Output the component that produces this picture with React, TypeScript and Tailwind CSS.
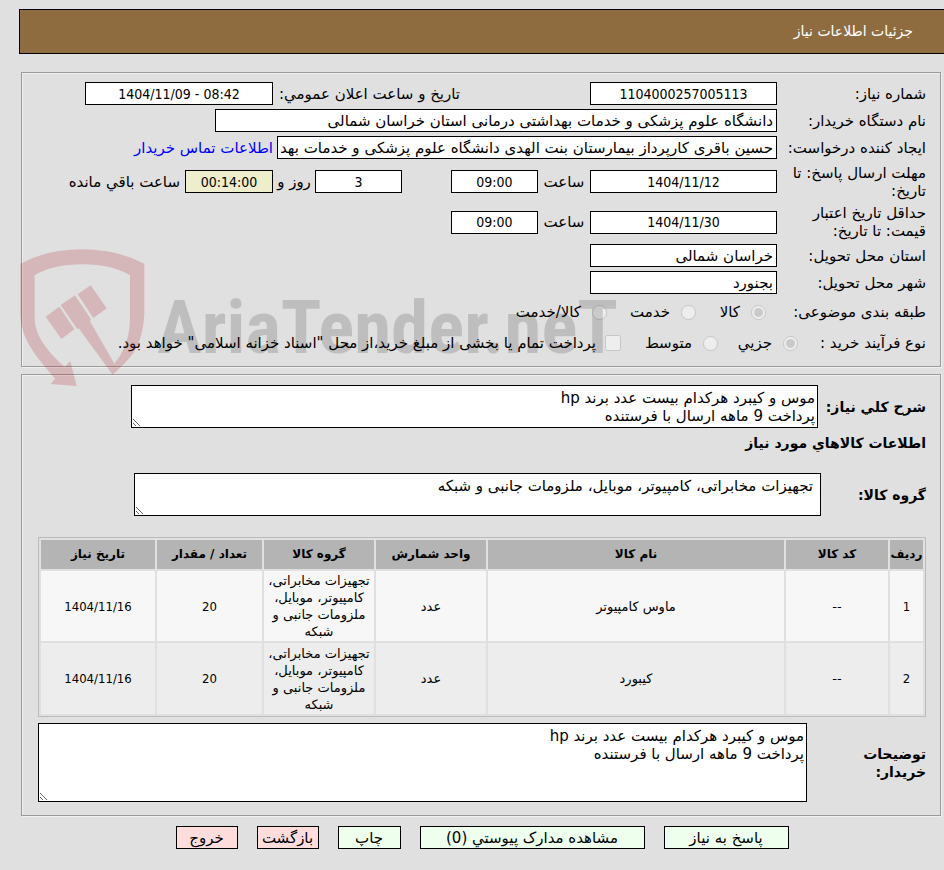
import React from 'react';

const items = [
  { id: 1, code: '--', name: 'ماوس کامپیوتر', unit: 'عدد', count: '20', date: '1404/11/16' },
  { id: 2, code: '--', name: 'کیبورد', unit: 'عدد', count: '20', date: '1404/11/16' },
];

const group = 'تجهیزات مخابراتی، کامپیوتر، موبایل، ملزومات جانبی و شبکه';
const description = 'موس و کیبرد هرکدام بیست عدد برند hp\nپرداخت 9 ماهه ارسال با فرستنده';

const fieldset = 'ml-[21px] mr-[3px] border border-[#9a9a9a] shadow-[1px_1px_0_#f0f0f0,inset_1px_1px_0_#f0f0f0] pr-[14px] pl-4';
const box = 'h-[23px] shrink-0 border border-black bg-white px-[3px] text-black outline-none';
// numbers and dates use the narrower face
const numeric = "text-center text-[14px] font-['DejaVu_Sans_Condensed','DejaVu_Sans',sans-serif]";
const area = 'block border border-black bg-white text-black outline-none overflow-hidden leading-[18px] pt-[3px]';
const button = 'h-[23px] border border-black text-center whitespace-nowrap';

const Row = ({ label, id, className, children }: { label: React.ReactNode; id?: string; className?: string; children: React.ReactNode }) => (
  <div className={`flex items-center ${className || 'h-[27px]'}`}>
    <label htmlFor={id} className="w-[149px] shrink-0 whitespace-nowrap">{label}</label>
    {children}
  </div>
);

const Watermark = () => (
  <div dir="ltr" className="absolute left-5 top-[249px] flex items-start gap-3 pointer-events-none">
    <svg width="125" height="138" viewBox="60 29 375 414" className="opacity-20 shrink-0" fill="#ae1822">
      <path d="M61 73Q140 30 247 30Q350 30 433 73V225Q430 295 400 342Q375 374 338 406L236 267L232 270L182 197L225 168L273 240L270 246L343 373Q390 315 390 235V108Q335 75 247 75Q158 75 104 108V235Q104 270 125 305Q150 345 194 383L211 366L230 440L152 434L165 418Q130 378 105 345Q61 285 61 225Z" />
      <path d="M137 232L178 202L223 270L184 299Z" />
      <path d="M233 165L272 138L320 207L280 236Z" />
    </svg>
    <span className="mt-[42px] font-['Roboto_Condensed',Lato,'Liberation_Sans',sans-serif] text-[75px] leading-[72px] font-bold text-black/15">AriaTender.neT</span>
  </div>
);

const App = () => {
  return (
    <main
      dir="rtl"
      className="relative min-h-screen bg-[#e0e0e0] pt-[9px] pb-5 text-black text-[15px] leading-[18px] font-['DejaVu_Sans',sans-serif]"
    >
      <h1 className="ml-[19px] h-[45px] border-y border-l border-black bg-[#8f6c40] pr-[31px] text-white text-[14px] leading-[43px]">
        جزئیات اطلاعات نیاز
      </h1>

      <section className={`${fieldset} mt-[18px] pt-[7px] pb-2`}>
        <Row label="شماره نیاز:" id="number">
          <input id="number" readOnly defaultValue="1104000257005113" className={`${box} ${numeric} w-[187px]`} />
          <label htmlFor="announce" className="mr-[130px] w-[187px] shrink-0 whitespace-nowrap">تاریخ و ساعت اعلان عمومي:</label>
          <input id="announce" readOnly dir="ltr" defaultValue="1404/11/09 - 08:42" className={`${box} ${numeric} w-[188px]`} />
        </Row>
        <Row label="نام دستگاه خریدار:" id="buyer">
          <input id="buyer" readOnly defaultValue="دانشگاه علوم پزشکی و خدمات بهداشتی درمانی استان خراسان شمالی" className={`${box} w-[562px]`} />
        </Row>
        <Row label="ایجاد کننده درخواست:" id="creator">
          <input id="creator" readOnly defaultValue="حسین باقری کارپرداز بیمارستان بنت الهدی دانشگاه علوم پزشکی و خدمات بهد" className={`${box} w-[500px]`} />
          <a href="#contact" className="mr-1 whitespace-nowrap text-[#0000ff]">اطلاعات تماس خریدار</a>
        </Row>
        <Row label={<>مهلت ارسال پاسخ: تا<br />تاریخ:</>} id="deadline" className="h-[41px]">
          <input id="deadline" readOnly defaultValue="1404/11/12" className={`${box} ${numeric} w-[187px]`} />
          <label htmlFor="deadline-time" className="w-[52px] text-center">ساعت</label>
          <input id="deadline-time" readOnly defaultValue="09:00" className={`${box} ${numeric} w-[87px]`} />
          <input id="days" readOnly defaultValue="3" className={`${box} ${numeric} mr-[49px] w-[87px]`} />
          <label htmlFor="days" className="w-[42px] text-center whitespace-nowrap">روز و</label>
          <input id="left" readOnly defaultValue="00:14:00" className={`${numeric} h-[23px] w-[88px] shrink-0 border border-black bg-[#eeeecc] outline-none`} />
          <label htmlFor="left" className="mr-[5px] whitespace-nowrap">ساعت باقي مانده</label>
        </Row>
        <Row label={<>حداقل تاریخ اعتبار<br />قیمت: تا تاریخ:</>} id="validity" className="h-10">
          <input id="validity" readOnly defaultValue="1404/11/30" className={`${box} ${numeric} w-[187px]`} />
          <label htmlFor="validity-time" className="w-[52px] text-center">ساعت</label>
          <input id="validity-time" readOnly defaultValue="09:00" className={`${box} ${numeric} w-[87px]`} />
        </Row>
        <Row label="استان محل تحویل:" id="province">
          <input id="province" readOnly defaultValue="خراسان شمالی" className={`${box} w-[187px]`} />
        </Row>
        <Row label="شهر محل تحویل:" id="city">
          <input id="city" readOnly defaultValue="بجنورد" className={`${box} w-[187px]`} />
        </Row>
        <div className="flex h-8 items-center whitespace-nowrap">
          <span className="w-[160px] shrink-0">طبقه بندی موضوعی:</span>
          <input type="radio" id="goods" name="category" disabled defaultChecked className="size-[15px]" />
          <label htmlFor="goods" className="w-[55px] pr-[11px]">کالا</label>
          <input type="radio" id="service" name="category" disabled className="size-[15px]" />
          <label htmlFor="service" className="w-[74px] pr-[11px]">خدمت</label>
          <input type="radio" id="both" name="category" disabled className="size-[15px]" />
          <label htmlFor="both" className="pr-[11px]">کالا/خدمت</label>
        </div>
        <div className="flex h-[30px] items-center whitespace-nowrap">
          <span className="w-[128px] shrink-0">نوع فرآیند خرید :</span>
          <input type="radio" id="small" name="process" disabled defaultChecked className="size-[15px]" />
          <label htmlFor="small" className="w-[65px] pr-[11px]">جزيي</label>
          <input type="radio" id="medium" name="process" disabled className="size-[15px]" />
          <label htmlFor="medium" className="w-[82px] pr-[11px]">متوسط</label>
          <input type="checkbox" id="treasury" disabled className="size-4" />
          <label htmlFor="treasury" className="pr-[9px]">پرداخت تمام یا بخشی از مبلغ خرید،از محل "اسناد خزانه اسلامی" خواهد بود.</label>
        </div>
      </section>

      <section className={`${fieldset} mt-[7px] pt-[10px] pb-[13px]`}>
        <div className="flex items-center">
          <label htmlFor="summary" className="w-[108px] shrink-0 text-[14px] font-bold whitespace-nowrap">شرح کلي نیاز:</label>
          <textarea id="summary" readOnly defaultValue={description} className={`${area} ml-[93px] h-[43px] flex-1 px-[2px]`} />
        </div>
        <h2 className="mt-[6px] h-[18px] text-[14px] font-bold">اطلاعات کالاهاي مورد نیاز</h2>
        <div className="mt-[21px] flex items-center">
          <label htmlFor="group" className="w-[105px] shrink-0 text-[14px] font-bold whitespace-nowrap">گروه کالا:</label>
          <textarea id="group" readOnly defaultValue={group} className={`${area} ml-24 h-[43px] flex-1 px-[7px]`} />
        </div>

        <table className="mt-[21px] w-full table-fixed border-separate border-spacing-[2px] border border-[#bbbbbb] text-center text-[13px] leading-[17px]">
          <thead>
            <tr className="h-[29px] bg-[#b4b4b4] text-[12px] whitespace-nowrap">
              <th className="w-[33px]">ردیف</th>
              <th className="w-[102px]">کد کالا</th>
              <th>نام کالا</th>
              <th className="w-[110px]">واحد شمارش</th>
              <th className="w-[110px]">گروه کالا</th>
              <th className="w-[105px]">تعداد / مقدار</th>
              <th className="w-[114px]">تاریخ نیاز</th>
            </tr>
          </thead>
          <tbody>
            {items.map((item) => (
              <tr key={item.id} className="h-[70px] even:h-[71px] odd:bg-[#f7f7f7] even:bg-[#ededed]">
                <td className="font-['DejaVu_Sans_Condensed',sans-serif]">{item.id}</td>
                <td>{item.code}</td>
                <td>{item.name}</td>
                <td>{item.unit}</td>
                <td>{group}</td>
                <td className="font-['DejaVu_Sans_Condensed',sans-serif]">{item.count}</td>
                <td className="font-['DejaVu_Sans_Condensed',sans-serif]">{item.date}</td>
              </tr>
            ))}
          </tbody>
        </table>

        <div className="mt-[6px] flex items-center">
          <label htmlFor="notes" className="w-[119px] shrink-0 text-[14px] font-bold">توضیحات<br />خریدار:</label>
          <textarea id="notes" readOnly defaultValue={description} className={`${area} h-[79px] flex-1 px-[2px]`} />
        </div>
      </section>

      <div className="mt-[10px] ml-5 flex justify-center gap-[19px]">
        <button type="button" className={`${button} w-[125px] bg-[#eeffee]`}>پاسخ به نیاز</button>
        <button type="button" className={`${button} w-[225px] bg-[#eeffee]`}>مشاهده مدارک پیوستي (0)</button>
        <button type="button" className={`${button} w-[63px] bg-[#eeffee]`}>چاپ</button>
        <button type="button" className={`${button} w-[62px] bg-[#ffdddd]`}>بازگشت</button>
        <button type="button" className={`${button} w-[62px] bg-[#ffdddd]`}>خروج</button>
      </div>

      <Watermark />
    </main>
  );
};

export default App;
